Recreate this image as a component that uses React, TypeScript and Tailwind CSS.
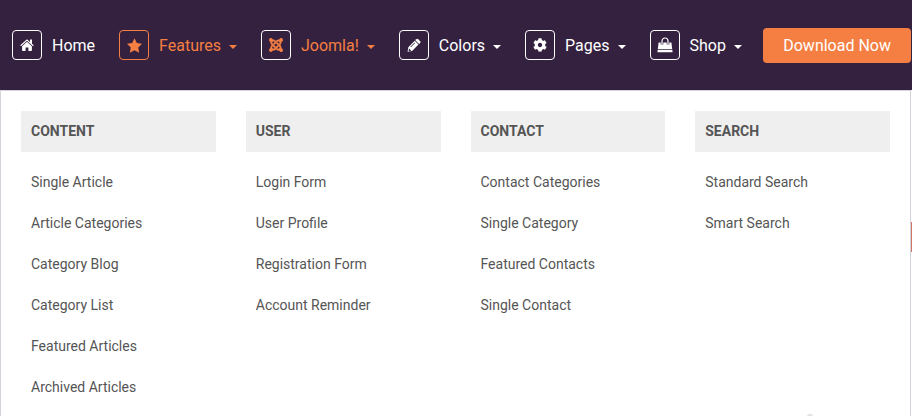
import React from "react";
import { ImStarFull, ImJoomla } from "react-icons/im";
import { FaCog } from "react-icons/fa";

function HomeIcon() {
  return (
    <svg viewBox="0 0 16 16" fill="currentColor" className="size-4" aria-hidden="true">
      <path d="M8 4.8l4.9 4.4v4.1a.8.8 0 0 1-.8.8H9.4v-3.6H6.6v3.6H3.9a.8.8 0 0 1-.8-.8V9.2z" />
      <path d="M1.2 8.3L8 2.2l3 2.7V2.6h2v4.1l1.8 1.6-.8.9L8 3.8 2 9.2z" />
    </svg>
  );
}

function PencilIcon() {
  return (
    <svg viewBox="0 0 16 16" fill="currentColor" className="size-4" aria-hidden="true">
      <path d="M10.3 2.2a1.3 1.3 0 0 1 1.8 0l2 2a1.3 1.3 0 0 1 0 1.8l-1 1-3.8-3.8z" />
      <path
        fillRule="evenodd"
        d="M8.7 3.8l3.8 3.8-6.4 6.4-4.5.8.7-4.6zM8.6 5.6L4.4 9.8l.5.5 4.2-4.2zM3 11.4l-.4 2.2.6.6 2.1-.4z"
      />
    </svg>
  );
}

function BagIcon() {
  return (
    <svg viewBox="0 0 16 16" fill="currentColor" className="size-4" aria-hidden="true">
      <path d="M1.6 5.6h12.8l.8 6.4H.8z" />
      <path d="M.7 12.8h14.6l.3 2.5H.4z" />
      <path d="M5 7.6V4.4a3 3 0 0 1 6 0v3.2" fill="none" stroke="#34213f" strokeWidth="2.6" />
      <path d="M5 7.6V4a3 3 0 0 1 6 0v3.6" fill="none" stroke="currentColor" strokeWidth="1.2" />
    </svg>
  );
}

const menu = [
  { label: "Home", icon: <HomeIcon />, tone: "text-white", box: "border-white", caret: false },
  { label: "Features", icon: <ImStarFull className="size-[15px]" />, tone: "text-[#f57e42]", box: "border-[#f57e42]", caret: true },
  { label: "Joomla!", icon: <ImJoomla />, tone: "text-[#f57e42]", box: "border-white", caret: true },
  { label: "Colors", icon: <PencilIcon />, tone: "text-white", box: "border-white", caret: true },
  { label: "Pages", icon: <FaCog />, tone: "text-white", box: "border-white", caret: true },
  { label: "Shop", icon: <BagIcon />, tone: "text-white", box: "border-white", caret: true },
];

const columns = [
  {
    title: "CONTENT",
    links: ["Single Article", "Article Categories", "Category Blog", "Category List", "Featured Articles", "Archived Articles"],
  },
  { title: "USER", links: ["Login Form", "User Profile", "Registration Form", "Account Reminder"] },
  { title: "CONTACT", links: ["Contact Categories", "Single Category", "Featured Contacts", "Single Contact"] },
  { title: "SEARCH", links: ["Standard Search", "Smart Search"] },
];

export default function App() {
  return (
    <div className="relative flex min-h-screen flex-col bg-white font-[Roboto,sans-serif]">
      <header className="flex h-[90px] items-center justify-between bg-[#34213f] pl-3 pr-px">
        <nav aria-label="Main">
          <ul className="flex gap-6">
            {menu.map((item) => (
              <li key={item.label}>
                <a href="#" className={`flex items-center whitespace-nowrap text-base ${item.tone}`}>
                  <span className={`mr-2.5 flex size-[30px] items-center justify-center rounded border text-sm ${item.box}`}>
                    {item.icon}
                  </span>
                  <span className="pt-0.5">{item.label}</span>
                  {item.caret && (
                    <svg viewBox="0 0 8 4" fill="currentColor" className="ml-2 mt-1 h-1 w-2" aria-hidden="true">
                      <path d="M0 0h8L4 4z" />
                    </svg>
                  )}
                </a>
              </li>
            ))}
          </ul>
        </nav>
        <button type="button" className="h-[35px] whitespace-nowrap rounded bg-[#f57e42] px-5 pt-0.5 text-base text-white">
          Download Now
        </button>
      </header>
      {/* Edge of the page's side tab, showing past the open menu */}
      <div className="absolute top-[222px] right-0 h-[30px] w-px bg-[#cf7566]" />
      <main className="mr-px grid grow grid-cols-4 content-start gap-[30px] border-x border-t border-[#d5d4dc] px-5 pt-5">
        {columns.map((column) => (
          <section key={column.title} className="text-sm text-[#555555]">
            <h2 className="mb-2.5 bg-[#efefef] px-2.5 text-sm leading-[41px] font-bold">{column.title}</h2>
            <ul>
              {column.links.map((link) => (
                <li key={link}>
                  <a href="#" className="block px-2.5 leading-[41px]">{link}</a>
                </li>
              ))}
            </ul>
          </section>
        ))}
      </main>
      <div className="absolute right-[99px] bottom-0 h-0.5 w-1.5 rounded-t-full bg-[#e4e4e4]" />
    </div>
  );
}
